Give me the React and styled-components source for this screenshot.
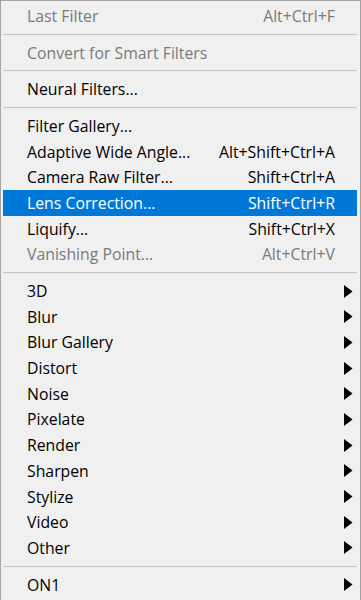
import React from "react";
import styled, { createGlobalStyle } from "styled-components";

const GlobalStyle = createGlobalStyle`
  html, body {
    margin: 0;
    padding: 0;
    background: #f0f0f0;
  }
`;

const Menu = styled.div`
  box-sizing: border-box;
  width: 361px;
  height: 600px;
  overflow: hidden;
  padding: 2px 3px 0 2px;
  background: #f0f0f0;
  border: 1px solid #a3a3a3;
  border-bottom: none;
  font-family: "Open Sans", "Noto Sans", sans-serif;
  font-size: 15.8px;
  color: #000;
`;

const Item = styled.div`
  display: flex;
  align-items: center;
  height: 25.7px;
  padding: 0 0 0 24px;
  background: ${(props) => (props.active ? "#0078d7" : "transparent")};
  color: ${(props) =>
    props.active ? "#fff" : props.disabled ? "#7a7a7a" : "#000"};
  white-space: nowrap;
`;

const Label = styled.span`
  flex: 1;
`;

const Shortcut = styled.span`
  padding-right: 22px;
  text-align: right;
`;

const ArrowBox = styled.span`
  display: flex;
  align-items: center;
  width: 13px;
`;

const Separator = styled.div`
  height: 11px;
  display: flex;
  align-items: center;

  &::after {
    content: "";
    flex: 1;
    height: 1px;
    background: #c4c4c4;
  }
`;

const Arrow = () => (
  <ArrowBox>
    <svg width="9" height="13" viewBox="0 0 9 13">
      <path d="M0 0 L8.5 6.5 L0 13 Z" fill="#000" />
    </svg>
  </ArrowBox>
);

const groups = [
  [{ label: "Last Filter", shortcut: "Alt+Ctrl+F", disabled: true }],
  [{ label: "Convert for Smart Filters", disabled: true }],
  [{ label: "Neural Filters..." }],
  [
    { label: "Filter Gallery..." },
    { label: "Adaptive Wide Angle...", shortcut: "Alt+Shift+Ctrl+A" },
    { label: "Camera Raw Filter...", shortcut: "Shift+Ctrl+A" },
    { label: "Lens Correction...", shortcut: "Shift+Ctrl+R", active: true },
    { label: "Liquify...", shortcut: "Shift+Ctrl+X" },
    { label: "Vanishing Point...", shortcut: "Alt+Ctrl+V", disabled: true },
  ],
  [
    "3D",
    "Blur",
    "Blur Gallery",
    "Distort",
    "Noise",
    "Pixelate",
    "Render",
    "Sharpen",
    "Stylize",
    "Video",
    "Other",
  ].map((label) => ({ label, submenu: true })),
  [{ label: "ON1", submenu: true }],
];

const App = () => (
  <>
    <GlobalStyle />
    <Menu>
      {groups.map((group, gi) => (
        <React.Fragment key={gi}>
          {gi > 0 && <Separator />}
          {group.map((item) => (
            <Item key={item.label} active={item.active} disabled={item.disabled}>
              <Label>{item.label}</Label>
              {item.shortcut && <Shortcut>{item.shortcut}</Shortcut>}
              {item.submenu && <Arrow />}
            </Item>
          ))}
        </React.Fragment>
      ))}
    </Menu>
  </>
);

export default App;
